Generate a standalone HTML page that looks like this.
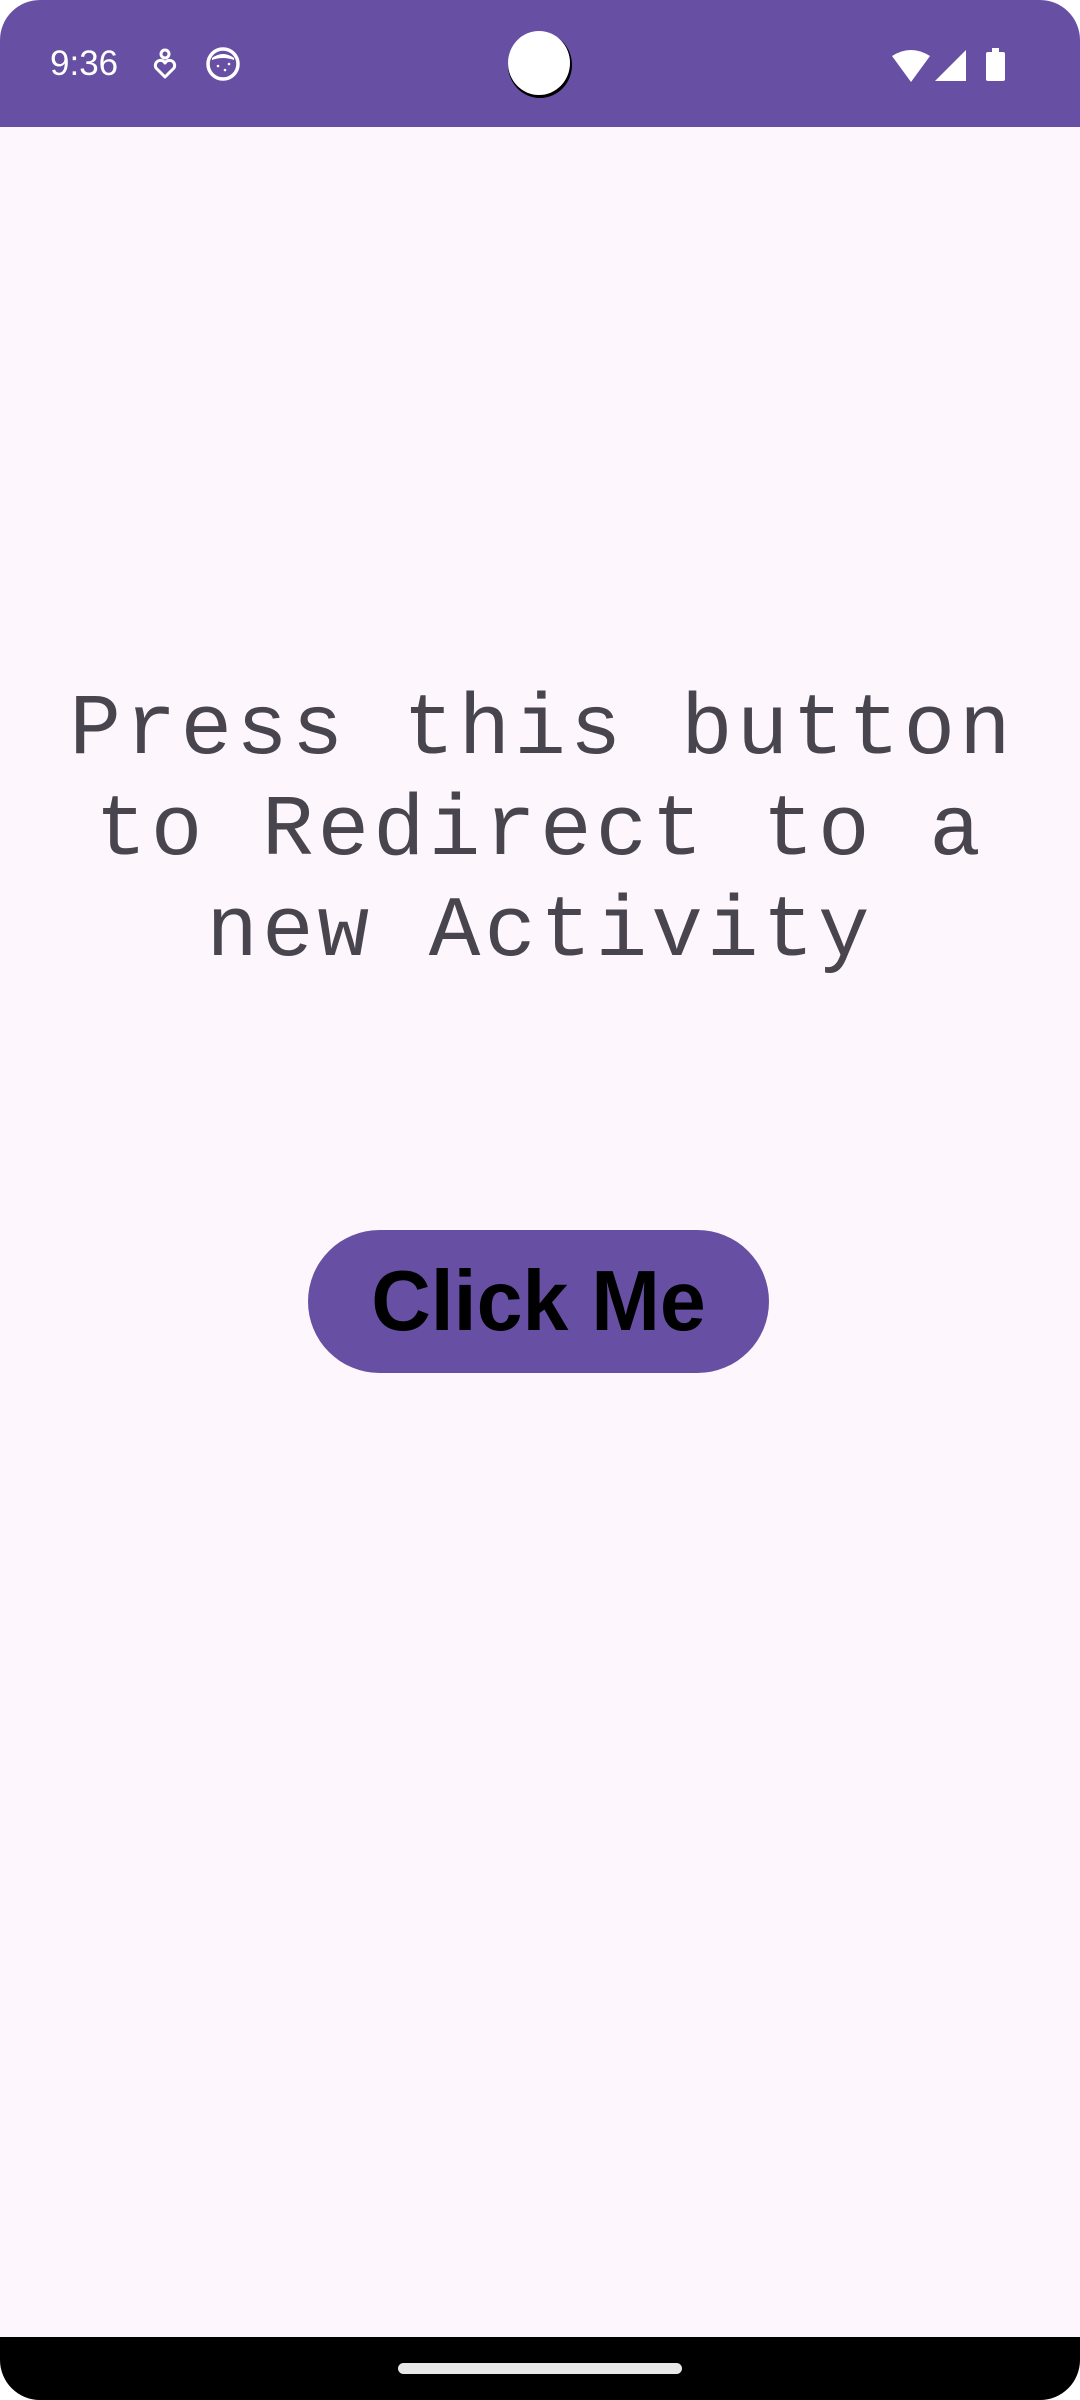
<!DOCTYPE html>
<html><head><meta charset="utf-8"><style>
html,body{margin:0;padding:0;}
body{width:1080px;height:2400px;position:relative;background:#fff;overflow:hidden;font-family:"Liberation Sans",sans-serif;}
.screen{position:absolute;left:0;top:0;width:1080px;height:2400px;background:#FDF7FD;border-radius:40px;overflow:hidden;}
.status{position:absolute;left:0;top:0;width:1080px;height:127px;background:#6750A4;}
.time{position:absolute;left:50px;top:44px;font-size:35px;color:#fff;line-height:40px;}
.cam{position:absolute;left:508px;top:31px;width:62px;height:64px;border-radius:50%;background:#fff;box-shadow:1px 2px 0 1px #000;}
.msg{position:absolute;left:0;width:1080px;top:680px;text-align:center;font-family:"Liberation Mono",monospace;font-size:86px;line-height:101px;color:#49454F;letter-spacing:4px;text-indent:4px;}
.btn{position:absolute;left:308px;top:1230px;width:461px;height:143px;border-radius:72px;background:#6750A4;text-align:center;}
.btn span{display:block;font-weight:bold;font-size:85px;line-height:143px;color:#000;letter-spacing:0px;transform:scaleX(0.97);}
.nav{position:absolute;left:0;top:2337px;width:1080px;height:63px;background:#000;}
.handle{position:absolute;left:398px;top:2363px;width:284px;height:11px;border-radius:6px;background:#e8e8e8;}
</style></head><body>
<div class="screen">
<div class="status">
<div class="time">9:36</div>
<svg style="position:absolute;left:150px;top:48px" width="30" height="32" viewBox="0 0 30 32"><circle cx="15" cy="6" r="4" fill="none" stroke="#fff" stroke-width="3"/><path d="M15 29 L6 20 A5 5 0 0 1 15 15 A5 5 0 0 1 24 20 Z" fill="none" stroke="#fff" stroke-width="3" stroke-linejoin="round"/></svg>
<svg style="position:absolute;left:205px;top:46px" width="36" height="36" viewBox="0 0 36 36"><circle cx="18" cy="18" r="15" fill="none" stroke="#fff" stroke-width="3.5"/><path d="M7 12 Q18 4 29 12 L29 14 Q18 10 7 14 Z" fill="#fff"/><circle cx="13" cy="20" r="1.3" fill="#fff"/><circle cx="20" cy="24" r="1.3" fill="#fff"/><circle cx="24" cy="18" r="1.3" fill="#fff"/></svg>
<div class="cam"></div>
<svg style="position:absolute;left:890px;top:48px" width="120" height="36" viewBox="0 0 120 36"><path d="M2 8 Q21 -4 40 8 L21 34 Z" fill="#fff"/><path d="M76 2 L76 33 L45 33 Z" fill="#fff"/><rect x="96" y="4" width="19" height="29" rx="2" fill="#fff"/><rect x="102" y="0" width="7" height="5" fill="#fff"/></svg>
</div>
<div class="msg">Press this button<br>to Redirect to a<br>new Activity</div>
<div class="btn"><span>Click Me</span></div>
<div class="nav"></div>
<div class="handle"></div>
</div>
</body></html>
